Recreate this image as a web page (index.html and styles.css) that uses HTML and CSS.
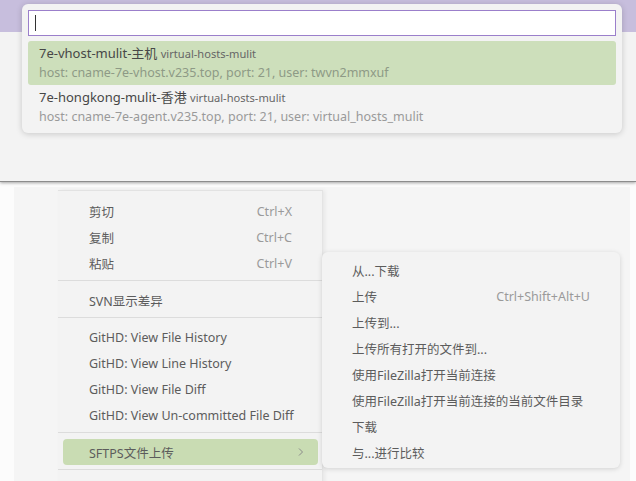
FILE: index.html
```html
<!DOCTYPE html>
<html lang="zh">
<head>
  <meta charset="UTF-8">
  <title>SFTP 连接</title>
  <link rel="stylesheet" href="styles.css">
</head>
<body>
  <div class="top">
    <div class="titlebar"></div>
  </div>
  <div class="lower">
    <div class="panel"></div>
  </div>

  <div class="quickpick">
    <div class="qp-input"><span class="caret"></span></div>
    <div class="qp-row selected">
      <div class="qp-title">7e-vhost-mulit-主机 <span class="qp-desc">virtual-hosts-mulit</span></div>
      <div class="qp-detail">host: cname-7e-vhost.v235.top, port: 21, user: twvn2mmxuf</div>
    </div>
    <div class="qp-row">
      <div class="qp-title">7e-hongkong-mulit-香港 <span class="qp-desc">virtual-hosts-mulit</span></div>
      <div class="qp-detail">host: cname-7e-agent.v235.top, port: 21, user: virtual_hosts_mulit</div>
    </div>
  </div>

  <div class="menu ctx">
    <div class="item"><span>剪切</span><span class="key">Ctrl+X</span></div>
    <div class="item"><span>复制</span><span class="key">Ctrl+C</span></div>
    <div class="item"><span>粘贴</span><span class="key">Ctrl+V</span></div>
    <div class="sep"></div>
    <div class="item"><span>SVN显示差异</span></div>
    <div class="sep"></div>
    <div class="item"><span>GitHD: View File History</span></div>
    <div class="item"><span>GitHD: View Line History</span></div>
    <div class="item"><span>GitHD: View File Diff</span></div>
    <div class="item"><span>GitHD: View Un-committed File Diff</span></div>
    <div class="sep"></div>
    <div class="item active"><span>SFTPS文件上传</span><span class="arrow">
      <svg width="8" height="10" viewBox="0 0 8 10"><path d="M2 1.5 L5.5 5 L2 8.5" fill="none" stroke="#8a8a8a" stroke-width="1"/></svg>
    </span></div>
    <div class="sep"></div>
    <div class="item"><span>&nbsp;</span></div>
  </div>

  <div class="menu sub">
    <div class="item"><span>从...下载</span></div>
    <div class="item"><span>上传</span><span class="key">Ctrl+Shift+Alt+U</span></div>
    <div class="item"><span>上传到...</span></div>
    <div class="item"><span>上传所有打开的文件到...</span></div>
    <div class="item"><span>使用FileZilla打开当前连接</span></div>
    <div class="item"><span>使用FileZilla打开当前连接的当前文件目录</span></div>
    <div class="item"><span>下载</span></div>
    <div class="item"><span>与...进行比较</span></div>
  </div>
</body>
</html>
```

FILE: styles.css
```css
html, body { margin: 0; padding: 0; }
body {
  width: 636px; height: 481px; overflow: hidden; position: relative;
  background: #fcfcfc; color: #5c5c5c;
  font-family: "Noto Sans", "Noto Sans CJK SC", sans-serif; font-size: 12.5px;
}

.top {
  height: 181px; background: #f3f3f3;
  border-bottom: 1px solid #8c8c8c; box-shadow: 0 1px 3px rgba(0,0,0,.35);
}
.titlebar { height: 32px; background: #c7bedd; }

.lower { display: flex; padding: 5px 6px 0 14px; height: 300px; }
.panel { flex: 1; background: #f5f5f5; }

/* quick pick */
.quickpick {
  position: absolute; left: 22px; top: 4px; width: 588px;
  padding: 6px 6px 4px; background: #f3f3f3; border-radius: 6px;
  box-shadow: 0 1px 6px rgba(0,0,0,.18);
  display: flex; flex-direction: column; gap: 5px;
}
.qp-input {
  height: 24px; background: #fff; border: 1px solid #9b7fcb;
  display: flex; align-items: center; padding-left: 6px;
}
.caret { width: 1px; height: 16px; background: #333; }
.qp-row { height: 44px; padding-left: 11px; border-radius: 3px; margin-top: -5px; white-space: nowrap; }
.qp-row.selected { margin-top: 0; background: #cddfbb; }
.qp-title { height: 24px; line-height: 24px; color: #474747; font-size: 13px; }
.qp-desc { font-size: 11.1px; color: #666; }
.qp-detail { height: 20px; line-height: 16px; color: #9a9a9a; font-size: 12.5px; }
.qp-row.selected .qp-detail { color: #8e9a86; }

/* menus */
.menu { position: absolute; background: #f3f3f3; }
.ctx {
  left: 58px; top: 190px; width: 264px; padding-top: 7px;
  border-top: 1px solid #e2e2e2; border-right: 1px solid #e4e4e4;
  box-shadow: 2px 0 4px rgba(0,0,0,.06);
}
.sub {
  left: 322px; top: 252px; width: 298px; height: 211px; padding-top: 5px;
  border-radius: 6px; box-shadow: 0 1px 5px rgba(0,0,0,.15);
}
.item {
  height: 26px; display: flex; align-items: center; justify-content: space-between;
  padding: 0 26px 0 26px; margin: 0 4px; border-radius: 4px; white-space: nowrap;
}
.ctx .item { margin: 0 4px 0 5px; }
.key { color: #9a9a9a; }
.item.active { background: #c9dcb3; padding-right: 13px; }
.arrow { display: flex; align-items: center; }
.sep { height: 1px; background: #dcdcdc; margin: 4px 0 6px; }
```
